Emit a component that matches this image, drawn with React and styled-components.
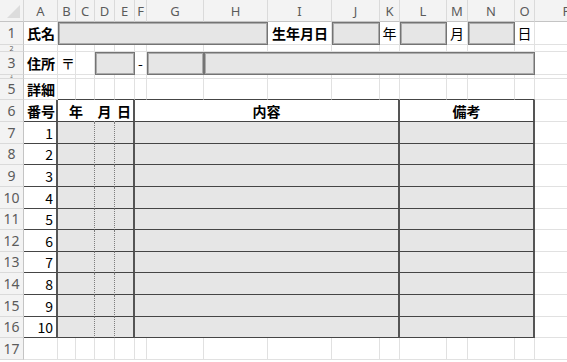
import React from "react";
import styled, { createGlobalStyle, css } from "styled-components";

const GlobalStyle = createGlobalStyle`
  body {
    margin: 0;
    background: #fff;
    font-family: "Noto Sans CJK JP", "Noto Sans", sans-serif;
  }
`;

const COLS = ["A", "B", "C", "D", "E", "F", "G", "H", "I", "J", "K", "L", "M", "N", "O", "P"];
const WIDTHS = [34, 18, 19, 20, 20, 12, 57, 64, 64, 48, 20, 47, 21, 47, 20, 64];

const Sheet = styled.div`
  display: grid;
  grid-template-columns: 24px ${WIDTHS.map((w) => `${w}px`).join(" ")};
  grid-auto-rows: min-content;
  width: 567px;
  height: 362px;
  overflow: hidden;
  color: #000;
`;

const Corner = styled.div`
  position: relative;
  height: 22px;
  background: #f3f3f3;
  border-right: 1px solid #d6d6d6;
  border-bottom: 1px solid #c4c4c4;
  box-sizing: border-box;

  &::after {
    content: "";
    position: absolute;
    right: 3px;
    bottom: 3px;
    border-left: 13px solid transparent;
    border-bottom: 13px solid #dcdcdc;
  }
`;

const ColHead = styled.div`
  display: flex;
  align-items: center;
  justify-content: center;
  height: 22px;
  box-sizing: border-box;
  background: #f3f3f3;
  border-right: 1px solid #dadada;
  border-bottom: 1px solid #c4c4c4;
  color: #5b5b5b;
  font-family: "Noto Sans", sans-serif;
  font-size: 13px;
  overflow: hidden;
`;

// rows squeezed to a few pixels only show a sliver of their number
const RowHead = styled.div`
  display: flex;
  align-items: center;
  justify-content: center;
  height: ${(p) => p.$h}px;
  box-sizing: border-box;
  background: #f3f3f3;
  border-right: 1px solid #c4c4c4;
  border-bottom: 1px solid #dadada;
  color: #5b5b5b;
  font-family: "Noto Sans", sans-serif;
  font-size: ${(p) => (p.$h < 12 ? p.$h : 14)}px;
  line-height: 1;
  overflow: hidden;
`;

const edge = (kind) => {
  switch (kind) {
    case "solid":
      return "1px solid #454545";
    case "thick":
      return "2px solid #555";
    case "dot":
      return "1px dotted #7c7c7c";
    case "none":
      return "1px solid transparent";
    default:
      return "1px solid #e1e1e1";
  }
};

const Cell = styled.div`
  grid-column: span ${(p) => p.$span || 1};
  display: flex;
  align-items: center;
  justify-content: ${(p) =>
    p.$align === "center" ? "center" : p.$align === "right" ? "flex-end" : "flex-start"};
  height: ${(p) => p.$h}px;
  box-sizing: border-box;
  padding: 0 3px;
  background: ${(p) => (p.$fill ? "#e6e6e6" : "#fff")};
  border-right: ${(p) => edge(p.$r)};
  border-bottom: ${(p) => edge(p.$b)};
  font-size: 14px;
  font-weight: ${(p) => (p.$bold ? 700 : 400)};
  white-space: nowrap;
  overflow: hidden;

  ${(p) =>
    p.$box &&
    css`
      border: 1px solid #747474;
      box-shadow: inset 0 0 0 1px #ababab;
    `}
`;

// each row: label, height, and cells that together cover A..P
const blank = (n = 1) => Array.from({ length: n }, () => ({}));
const box = (span = 1) => ({ span, fill: true, box: true });

const rows = [
  {
    label: "1",
    h: 23,
    cells: [
      { text: "氏名", bold: true },
      box(7),
      { text: "生年月日", bold: true, align: "right" },
      box(),
      { text: "年", align: "center" },
      box(),
      { text: "月", align: "center" },
      box(),
      { text: "日", align: "center" },
      {},
    ],
  },
  { label: "2", h: 7, cells: blank(16) },
  {
    label: "3",
    h: 23,
    cells: [
      { text: "住所", bold: true },
      { text: "〒" },
      {},
      box(2),
      { text: "-", align: "center" },
      box(),
      box(8),
      {},
    ],
  },
  { label: "4", h: 4, cells: blank(16) },
  {
    label: "5",
    h: 21,
    cells: [
      { text: "詳細", bold: true },
      ...Array.from({ length: 14 }, () => ({ b: "solid" })),
      {},
    ],
  },
  {
    label: "6",
    h: 22,
    cells: [
      { text: "番号", bold: true, r: "thick", b: "solid" },
      { text: "年", bold: true, align: "center", span: 2, r: "none", b: "solid" },
      { text: "月", bold: true, align: "center", r: "none", b: "solid" },
      { text: "日", bold: true, align: "center", r: "thick", b: "solid" },
      { text: "内容", bold: true, align: "center", span: 6, r: "thick", b: "solid" },
      { text: "備考", bold: true, align: "center", span: 4, r: "thick", b: "solid" },
      {},
    ],
  },
];

const dataHeights = [22, 21, 22, 22, 21, 22, 21, 22, 22, 21];
dataHeights.forEach((h, i) => {
  rows.push({
    label: String(7 + i),
    h,
    cells: [
      { text: String(i + 1), align: "right", r: "thick", b: "solid" },
      { span: 2, fill: true, r: "dot", b: "solid" },
      { fill: true, r: "dot", b: "solid" },
      { fill: true, r: "thick", b: "solid" },
      { span: 6, fill: true, r: "thick", b: "solid" },
      { span: 4, fill: true, r: "thick", b: "solid" },
      {},
    ],
  });
});

rows.push({ label: "17", h: 22, cells: blank(16) });

export default function App() {
  return (
    <>
      <GlobalStyle />
      <Sheet>
        <Corner />
        {COLS.map((c) => (
          <ColHead key={c}>{c}</ColHead>
        ))}
        {rows.map((row) => (
          <React.Fragment key={row.label}>
            <RowHead $h={row.h}>{row.label}</RowHead>
            {row.cells.map((cell, j) => (
              <Cell
                key={j}
                $h={row.h}
                $span={cell.span}
                $align={cell.align}
                $bold={cell.bold}
                $fill={cell.fill}
                $box={cell.box}
                $r={cell.r}
                $b={cell.b}
              >
                {cell.text}
              </Cell>
            ))}
          </React.Fragment>
        ))}
      </Sheet>
    </>
  );
}
